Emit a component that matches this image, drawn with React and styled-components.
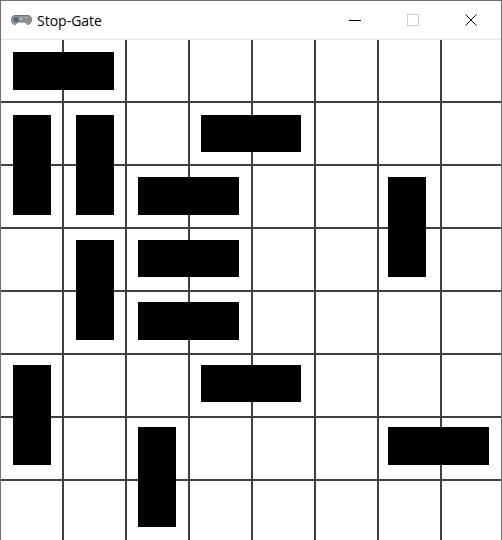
import React from "react";
import styled, { createGlobalStyle } from "styled-components";

const Global = createGlobalStyle`
  html, body { margin: 0; padding: 0; background: #fff; }
`;

const Window = styled.div`
  box-sizing: border-box;
  width: 502px;
  height: 540px;
  display: flex;
  flex-direction: column;
  background: #fff;
  border: 1px solid #707070;
  font-family: "Segoe UI", "Open Sans", "Noto Sans", sans-serif;
`;

const TitleBar = styled.header`
  height: 38px;
  flex: none;
  display: flex;
  align-items: center;
  padding-left: 10px;
`;

const Title = styled.span`
  margin-left: 5px;
  font-size: 14px;
  color: #000;
  flex: 1;
`;

const Controls = styled.div`
  display: flex;
  height: 100%;
  margin-right: 1px;
`;

const Control = styled.div`
  width: 58px;
  display: flex;
  align-items: center;
  justify-content: center;
`;

const Board = styled.main`
  flex: none;
  width: 500px;
  height: 500px;
  display: grid;
  grid-template-columns: repeat(8, 62.5px);
  grid-template-rows: repeat(8, 62.5px);
  background-color: #fff;
  background-image:
    repeating-linear-gradient(to right, transparent 0, transparent 61.5px, #404040 61.5px, #404040 63px, transparent 63px, transparent 62.5px),
    repeating-linear-gradient(to bottom, transparent 0, transparent 61.5px, #404040 61.5px, #404040 63px, transparent 63px, transparent 62.5px);
  border-top: 1px solid #e5e5e5;
  box-sizing: content-box;
`;

const Piece = styled.div`
  grid-column: ${(p) => p.$col + 1} / span ${(p) => (p.$vertical ? 1 : 2)};
  grid-row: ${(p) => p.$row + 1} / span ${(p) => (p.$vertical ? 2 : 1)};
  margin: 12px 12.5px 13px 12px;
  background: #000;
`;

const GameIcon = () => (
  <svg width="21" height="12" viewBox="0 0 21 12" aria-hidden="true">
    <path d="M4 1.5h13c2 0 3.5 1.6 3.5 4s-1.5 5-3.2 5c-1.4 0-2.2-1.6-3.3-2.5H7c-1.1.9-1.9 2.5-3.3 2.5C2 10.5.5 8 .5 5.500s1.500-4 3.500-4z" fill="#8d95a3" stroke="#6c7480" strokeWidth="1" />
    <circle cx="5" cy="5.500" r="2.600" fill="#5d6675" />
    <rect x="9" y="4" width="2" height="1.500" fill="#d7d2b0" />
    <circle cx="15.500" cy="3.800" r="1" fill="#d9b23c" />
    <circle cx="17.500" cy="5.500" r="1" fill="#d9503c" />
    <circle cx="15.500" cy="7.200" r="1" fill="#5cab4e" />
    <circle cx="13.500" cy="5.500" r="1" fill="#5c86c9" />
  </svg>
);

const pieces = [
  [0, 0, false], [0, 1, true], [1, 1, true], [3, 1, false],
  [2, 2, false], [6, 2, true], [1, 3, true], [2, 3, false],
  [2, 4, false], [0, 5, true], [3, 5, false], [2, 6, true], [6, 6, false],
];

export default function App() {
  return (
    <Window>
      <Global />
      <TitleBar>
        <GameIcon />
        <Title>Stop-Gate</Title>
        <Controls>
          <Control>
            <svg width="12" height="12" viewBox="0 0 12 12"><path d="M0 6.500h12" stroke="#000" /></svg>
          </Control>
          <Control>
            <svg width="12" height="12" viewBox="0 0 12 12"><rect x=".5" y=".5" width="11" height="11" fill="none" stroke="#ccc" /></svg>
          </Control>
          <Control>
            <svg width="12" height="12" viewBox="0 0 12 12"><path d="M.5.500l11 11M11.500.500l-11 11" stroke="#000" /></svg>
          </Control>
        </Controls>
      </TitleBar>
      <Board>
        {pieces.map(([col, row, vertical]) => (
          <Piece key={`${col}-${row}`} $col={col} $row={row} $vertical={vertical} />
        ))}
      </Board>
    </Window>
  );
}
